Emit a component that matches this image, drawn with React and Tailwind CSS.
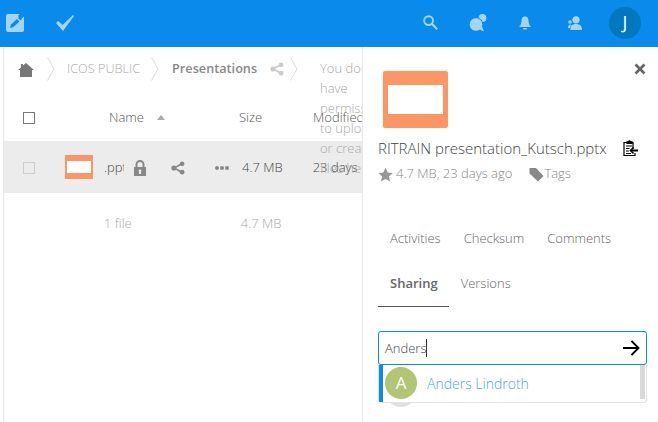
function PageIcon({ className }) {
    return (
        <div className={`bg-[#fc9765] flex items-center justify-center ${className}`}>
            <div className="bg-white w-[86%] h-[52%]" />
        </div>
    );
}

function Chevron() {
    return (
        <svg width="8" height="24" viewBox="0 0 8 24" className="shrink-0">
            <path d="M0.5 0.5 L7 12 L0.5 23.5" fill="none" stroke="#dcdcdc" strokeWidth="1" />
        </svg>
    );
}

function ShareIcon({ size = 16, color = "#888" }) {
    return (
        <svg width={size} height={size} viewBox="0 0 16 16" className="shrink-0">
            <path d="M12.5 3.2 L3.5 8 L12.5 12.8" fill="none" stroke={color} strokeWidth="1.8" />
            <circle cx="12.7" cy="3.2" r="2.7" fill={color} />
            <circle cx="3.3" cy="8" r="2.9" fill={color} />
            <circle cx="12.7" cy="12.8" r="2.7" fill={color} />
        </svg>
    );
}

function Header() {
    return (
        <header className="h-[47px] bg-[#0a8aea] flex items-center pl-[6px] pr-[17px] pb-[2px] shrink-0">
            <svg width="18" height="18" viewBox="0 0 18 18">
                <path d="M2 0 H13.5 L12 2 L15 5 L18 2.5 V16 A2 2 0 0 1 16 18 H2 A2 2 0 0 1 0 16 V2 A2 2 0 0 1 2 0 Z" fill="#a6d4f7" />
                <path d="M4 14 L5 10.5 L11 5 L13.5 7.5 L7.5 13 Z" fill="#0a8aea" />
                <path d="M12 4 L13.5 2.5 L16 5 L14.5 6.5 Z" fill="#0a8aea" />
            </svg>
            <svg width="18" height="16" viewBox="0 0 18 16" className="ml-[32px]">
                <path d="M0 8 L2.2 6 L6.6 10 L17 0 L18 1 L7 16 Z" fill="#a6d4f7" />
            </svg>
            <div className="flex-1" />
            <svg width="15" height="15" viewBox="0 0 15 15">
                <circle cx="5.6" cy="5.6" r="4.4" fill="none" stroke="#a6d4f7" strokeWidth="1.9" />
                <path d="M8.8 8.8 L14.2 14.2" stroke="#a6d4f7" strokeWidth="2.2" />
            </svg>
            <svg width="18" height="18" viewBox="0 0 18 18" className="ml-[31px]">
                <circle cx="13.5" cy="4" r="3.9" fill="#a6d4f7" />
                <circle cx="7" cy="10.5" r="6.8" fill="#a6d4f7" stroke="#0a8aea" strokeWidth="1" />
                <path d="M10.5 15.5 L15 17.5 L13 12.5 Z" fill="#a6d4f7" />
            </svg>
            <svg width="12" height="14" viewBox="0 0 12 14" className="ml-[32px]">
                <path d="M6 0.5 C3 0.5 2.5 3 2.5 5 C2.5 7.5 1.5 9 0.5 10 V11 H11.5 V10 C10.5 9 9.5 7.5 9.5 5 C9.5 3 9 0.5 6 0.5 Z" fill="#a6d4f7" />
                <rect x="4" y="12" width="4" height="1.6" rx="0.8" fill="#a6d4f7" />
            </svg>
            <svg width="14" height="14" viewBox="0 0 14 14" className="ml-[37px]">
                <circle cx="8" cy="3.8" r="3.6" fill="#a6d4f7" />
                <path d="M2.5 14 C2 10 4 8 8 8 C12 8 14 10 14 14 Z" fill="#a6d4f7" />
                <circle cx="2" cy="6" r="1.8" fill="#a6d4f7" />
                <path d="M0 12 C0 9.5 1 8.5 3 8.5 L2 12 Z" fill="#a6d4f7" />
            </svg>
            <div className="ml-[27px] w-8 h-8 rounded-full bg-[#0078bd] flex items-center justify-center text-white text-[18px]">
                J
            </div>
        </header>
    );
}

function FileList() {
    return (
        <main className="w-[359px] shrink-0 relative overflow-hidden border-l border-[#e8e8e8] ml-[3px] font-light">
            <div className="h-[44px] flex items-center pl-[14px]">
                <svg width="16" height="14" viewBox="0 0 16 14" className="mr-[13px] shrink-0 mt-[1px]">
                    <path d="M8 0 L16 7 H14 V14 H2 V7 H0 L3 4.4 V1 H5 V2.6 Z" fill="#777" />
                </svg>
                <Chevron />
                <span className="ml-[12px] text-[12.7px] text-[#aaa]">ICOS PUBLIC</span>
                <div className="ml-[11px]"><Chevron /></div>
                <span className="ml-[13px] text-[12.7px] font-semibold text-[#888]">Presentations</span>
                <div className="ml-[13px]"><ShareIcon size={14} color="#ccc" /></div>
                <div className="ml-[6px]"><Chevron /></div>
            </div>

            {/* permission notice sits over the columns, as in the original */}
            <p className="absolute left-[316px] top-[11px] w-[60px] text-[13px] leading-[20px] text-[#aaa]">
                You don't have permission to upload or create files here
            </p>

            <div className="h-[50px] flex items-center pt-[3px] text-[13px] text-[#555] whitespace-nowrap">
                <span className="ml-[19px] w-[12px] h-[12px] border border-[#777] shrink-0" />
                <span className="ml-[74px] shrink-0">Name</span>
                <svg width="8" height="5" viewBox="0 0 8 5" className="ml-[13px] shrink-0">
                    <path d="M4 0 L8 5 H0 Z" fill="#aaa" />
                </svg>
                <span className="ml-[74px] shrink-0">Size</span>
                <span className="ml-[51px] shrink-0">Modified</span>
            </div>

            <div className="h-[52px] bg-[#ececec] flex items-center text-[13px] text-[#444] whitespace-nowrap">
                <span className="ml-[19px] w-[12px] h-[12px] border border-[#ccc] shrink-0 mt-[1px]" />
                <PageIcon className="ml-[30px] w-[28px] h-[24px] shrink-0" />
                <span className="ml-[11px] w-[20px] overflow-hidden shrink-0 pt-[1px]">.pptx</span>
                <svg width="14" height="16" viewBox="0 0 14 16" className="ml-[9px] shrink-0 mt-[1px]">
                    <path d="M3.5 7 V4.5 A3.5 3.5 0 0 1 10.5 4.5 V7" fill="none" stroke="#888" strokeWidth="2" />
                    <path d="M1 7 H13 V16 H1 Z M7 9.5 A1.3 1.3 0 0 0 6 11.7 V14 H8 V11.7 A1.3 1.3 0 0 0 7 9.5 Z" fill="#888" fillRule="evenodd" />
                </svg>
                <div className="ml-[24px] shrink-0 mt-[1px]"><ShareIcon size={14} color="#888" /></div>
                <div className="ml-[30px] flex gap-[1px] shrink-0 mt-[1px]">
                    <span className="w-[4px] h-[4px] rounded-full bg-[#888]" />
                    <span className="w-[4px] h-[4px] rounded-full bg-[#888]" />
                    <span className="w-[4px] h-[4px] rounded-full bg-[#888]" />
                </div>
                <span className="ml-[13px] shrink-0 pt-[1px]">4.7 MB</span>
                <span className="ml-[30px] shrink-0 pt-[1px]">23 days</span>
            </div>

            <div className="h-[60px] flex items-center pt-[2px] text-[13px] text-[#aaa]">
                <span className="ml-[100px]">1 file</span>
                <span className="ml-[109px]">4.7 MB</span>
            </div>
        </main>
    );
}

function Sidebar() {
    return (
        <aside className="flex-1 relative border-l border-[#e8e8e8] pl-[15px] pr-[10px] min-w-0 font-light">
            <svg width="12" height="12" viewBox="0 0 12 12" className="absolute right-[12px] top-[16px]">
                <path d="M1.5 1.5 L10.5 10.5 M10.5 1.5 L1.5 10.5" stroke="#666" strokeWidth="2.6" />
            </svg>
            <PageIcon className="ml-[5px] mt-[24px] w-[65px] h-[57px] rounded-[2px]" />
            <div className="mt-[9px] flex items-center h-[22px] text-[15px] text-[#444] whitespace-nowrap">
                <span>RITRAIN presentation_Kutsch.pptx</span>
                <svg width="15" height="16" viewBox="0 0 15 16" className="ml-[16px]" fill="none" stroke="#000" strokeWidth="1.2">
                    <path d="M4 2.5 H1 V15.5 H12 V13 M10 9 V2.5 H9" />
                    <path d="M4 3.5 V1.8 H5.5 A1 1 0 0 1 7.5 1.8 H9 V3.5 Z" fill="#000" />
                    <path d="M3 6 H9 M3 8.5 H6.5 M3 11 H6 M3 13.5 H8" />
                    <path d="M15 10.5 H8" strokeWidth="2" />
                    <path d="M10.5 7.5 L7.5 10.5 L10.5 13.5" strokeWidth="1.6" />
                </svg>
            </div>
            <div className="mt-[5px] flex items-center h-[20px] text-[13px] text-[#888]">
                <svg width="15" height="15" viewBox="0 0 24 24" className="shrink-0">
                    <path d="M12 1 L15.5 8.6 L23.5 9.5 L17.5 15 L19.2 23 L12 19 L4.8 23 L6.5 15 L0.5 9.5 L8.5 8.6 Z" fill="#999" />
                </svg>
                <span className="ml-[3px] whitespace-nowrap">4.7 MB, 23 days ago</span>
                <svg width="15" height="15" viewBox="0 0 15 15" className="ml-[17px] shrink-0">
                    <path d="M0.5 1 H7 L14.5 9 L9 14.5 L0.5 6.5 Z" fill="#888" />
                </svg>
                <span>Tags</span>
            </div>
            <nav className="mt-[43px] h-[24px] flex items-center text-[13px] text-[#666] pl-[12px] gap-[23px]">
                <span>Activities</span>
                <span>Checksum</span>
                <span>Comments</span>
            </nav>
            <nav className="mt-[22px] w-[71px] h-[34px] border-b border-[#555] pl-[12px] pb-[12px] flex items-center text-[13px] text-[#666] whitespace-nowrap">
                <span className="font-semibold text-[#666]">Sharing</span>
                <span className="ml-[23px]">Versions</span>
            </nav>
            <div className="mt-[24px] w-[269px] h-[34px] border border-[#0a8aea] rounded-[3px] flex items-center pl-[6px] pr-[6px] text-[13px] text-[#444]">
                <span className="border-r border-[#333] leading-[18px]">Anders</span>
                <svg width="18" height="18" viewBox="0 0 18 18" className="ml-auto">
                    <path d="M1 9 H16.5 M9.5 2 L16.5 9 L9.5 16" fill="none" stroke="#000" strokeWidth="1.8" />
                </svg>
            </div>
            <div className="relative w-[269px]">
                <div className="absolute left-[7px] top-[10px] w-[32px] h-[32px] rounded-full bg-[#e0e0e0]" />
                <div className="relative bg-white h-[38px] pb-[1px] border border-t-0 border-[#e4e4e4] rounded-b-[3px] flex items-center">
                    <div className="absolute left-0 top-0 bottom-0 w-[4px] bg-[#0a8aea]" />
                    <div className="ml-[6px] w-8 h-8 rounded-full bg-[#b2c574] text-white text-[17px] font-normal flex items-center justify-center">A</div>
                    <span className="ml-[10px] text-[14px] text-[#4aa8f0]">Anders Lindroth</span>
                    <div className="absolute right-[1px] top-0 w-[5px] h-[34px] bg-[#d9d9d9]" />
                </div>
            </div>
        </aside>
    );
}

export default function App() {
    return (
        <div className="w-[658px] h-[422px] bg-white flex flex-col overflow-hidden font-['Open_Sans',sans-serif]">
            <Header />
            <div className="flex flex-1 min-h-0">
                <FileList />
                <Sidebar />
            </div>
        </div>
    );
}
